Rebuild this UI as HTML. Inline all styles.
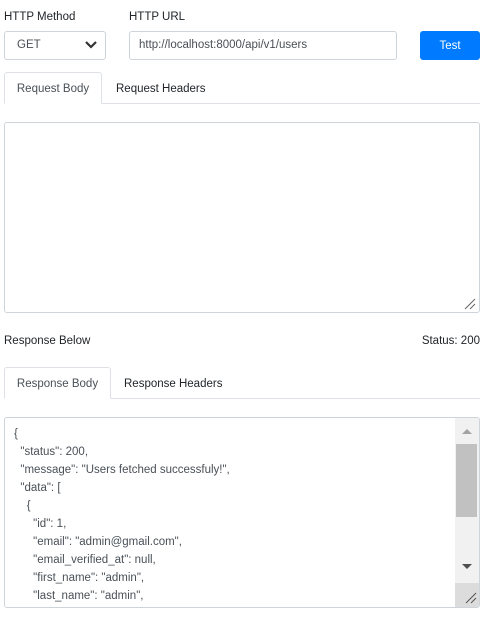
<!DOCTYPE html>
<html><head><style>
*{box-sizing:border-box;margin:0;padding:0}
body{width:489px;height:619px;background:#fff;font-family:"Liberation Sans",sans-serif;font-size:11.5px;color:#212529;position:relative;overflow:hidden}
.a{position:absolute}
.box{border:1px solid #ced4da;border-radius:3px;background:#fff}
.tabline{height:1px;background:#dee2e6}
.tab{border:1px solid #dee2e6;border-bottom:1px solid #fff;border-radius:3px 3px 0 0;background:#fff;color:#495057}
.code{font-size:11.5px;color:#495057;line-height:18px;white-space:pre}
</style></head><body>
<div class="a" style="left:4px;top:11px">HTTP Method</div>
<div class="a" style="left:129px;top:11px">HTTP URL</div>
<div class="a box" style="left:4px;top:31px;width:102px;height:29px"></div>
<div class="a" style="left:17px;top:39px;color:#495057">GET</div>
<svg class="a" style="left:84px;top:40px" width="14" height="10"><path d="M2 2 L7 7 L12 2" stroke="#333" stroke-width="2.2" fill="none"/></svg>
<div class="a box" style="left:129px;top:31px;width:268px;height:29px"></div>
<div class="a" style="left:139px;top:39px;color:#495057">http://localhost:8000/api/v1/users</div>
<div class="a" style="left:420px;top:31px;width:60px;height:29px;background:#007bff;border-radius:3px;color:#fff;text-align:center;line-height:31px">Test</div>

<div class="a tabline" style="left:4px;top:103px;width:476px"></div>
<div class="a tab" style="left:4px;top:72px;width:98px;height:32px;text-align:center;line-height:33px">Request Body</div>
<div class="a" style="left:116px;top:83px">Request Headers</div>
<div class="a box" style="left:4px;top:122px;width:476px;height:191px"></div>
<svg class="a" style="left:464px;top:298px" width="12" height="12"><path d="M1 11 L11 1 M6 11 L11 6" stroke="#666" stroke-width="1"/></svg>

<div class="a" style="left:4px;top:335px">Response Below</div>
<div class="a" style="right:9px;top:335px">Status: 200</div>

<div class="a tabline" style="left:4px;top:398px;width:476px"></div>
<div class="a tab" style="left:4px;top:367px;width:107px;height:32px;text-align:center;line-height:33px">Response Body</div>
<div class="a" style="left:124px;top:378px">Response Headers</div>
<div class="a box" style="left:4px;top:417px;width:476px;height:191px;overflow:hidden">
<div class="code" style="position:absolute;left:9px;top:7px">{
  "status": 200,
  "message": "Users fetched successfuly!",
  "data": [
    {
      "id": 1,
      "email": "admin@gmail.com",
      "email_verified_at": null,
      "first_name": "admin",
      "last_name": "admin",</div>
<div style="position:absolute;left:450px;top:0;width:24px;height:189px;background:#f1f1f1"></div>
<div style="position:absolute;left:451px;top:26px;width:21px;height:73px;background:#c1c1c1"></div>
<svg style="position:absolute;left:455px;top:8px" width="14" height="10"><path d="M2 8 L7 3 L12 8Z" fill="#a3a3a3"/></svg>
<svg style="position:absolute;left:455px;top:144px" width="14" height="10"><path d="M2 2 L7 7 L12 2Z" fill="#505050"/></svg>
<div style="position:absolute;left:450px;top:165px;width:24px;height:24px;background:#dcdcdc"></div>
<svg style="position:absolute;left:460px;top:174px" width="12" height="12"><path d="M1 11 L11 1 M6 11 L11 6" stroke="#555" stroke-width="1"/></svg>
</div>
</body></html>
